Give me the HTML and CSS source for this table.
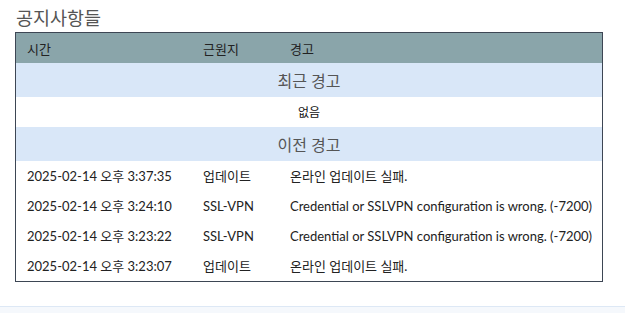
FILE: index.html
```html
<!DOCTYPE html>
<html lang="ko">
<head>
<meta charset="utf-8">
<link rel="stylesheet" href="styles.css">
</head>
<body>
<div class="page">
  <h2 class="title">공지사항들</h2>
  <table class="notices">
    <thead>
      <tr class="head">
        <th class="c-time">시간</th>
        <th class="c-src">근원지</th>
        <th class="c-msg">경고</th>
      </tr>
    </thead>
    <tbody>
      <tr class="section"><td colspan="3">최근 경고</td></tr>
      <tr class="empty"><td colspan="3">없음</td></tr>
      <tr class="section"><td colspan="3">이전 경고</td></tr>
      <tr class="row">
        <td>2025-02-14 오후 3:37:35</td>
        <td>업데이트</td>
        <td>온라인 업데이트 실패.</td>
      </tr>
      <tr class="row">
        <td>2025-02-14 오후 3:24:10</td>
        <td>SSL-VPN</td>
        <td>Credential or SSLVPN configuration is wrong. (-7200)</td>
      </tr>
      <tr class="row">
        <td>2025-02-14 오후 3:23:22</td>
        <td>SSL-VPN</td>
        <td>Credential or SSLVPN configuration is wrong. (-7200)</td>
      </tr>
      <tr class="row">
        <td>2025-02-14 오후 3:23:07</td>
        <td>업데이트</td>
        <td>온라인 업데이트 실패.</td>
      </tr>
    </tbody>
  </table>
</div>
<div class="footer"></div>
</body>
</html>
```
FILE: styles.css
```css
html, body {
  margin: 0;
  padding: 0;
  background: #ffffff;
}
body {
  font-family: Lato, "Noto Sans CJK KR", sans-serif;
  color: #222;
  height: 313px;
  overflow: hidden;
}
.page {
  padding: 0 22px 0 15px;
  height: 306px;
  box-sizing: border-box;
}
.title {
  margin: 0;
  padding: 7px 0 0 1px;
  height: 32px;
  box-sizing: border-box;
  font-size: 18.5px;
  line-height: 22px;
  font-weight: normal;
  color: #555;
}
.notices {
  width: 588px;
  border-collapse: collapse;
  border: 1px solid #3d4654;
  font-size: 13px;
}
.notices td, .notices th {
  padding: 0;
}
.head {
  background: #8aa5aa;
  height: 30px;
}
.head th {
  font-weight: normal;
  text-align: left;
  color: #222;
  font-size: 13px;
  padding-top: 1px;
}
.c-time { width: 176px; padding-left: 11px !important; }
.c-src { width: 87px; }
.section td {
  background: #d9e7f8;
  height: 34px;
  text-align: center;
  font-size: 16px;
  color: #555;
}
.empty td {
  height: 30px;
  text-align: center;
  color: #111;
  font-size: 12px;
}
.row td {
  height: 30px;
  color: #222;
  white-space: nowrap;
}
.row td:first-child {
  padding-left: 11px;
}
.footer {
  height: 7px;
  border-top: 1px solid #dde8f5;
  background: #f5f8fc;
}
```
